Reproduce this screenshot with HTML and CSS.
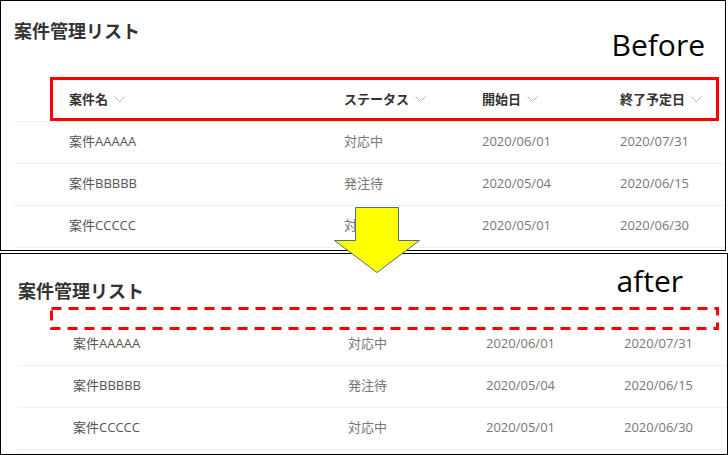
FILE: index.html
```html
<!DOCTYPE html>
<html lang="ja">
<head>
<meta charset="utf-8">
<title>案件管理リスト</title>
<link rel="stylesheet" href="styles.css">
</head>
<body>
<div class="page">
  <section class="panel panel-before">
    <div class="panel-head">
      <h2 class="list-title">案件管理リスト</h2>
      <span class="label">Before</span>
    </div>
    <div class="list">
      <div class="header-row">
        <div class="header-box cols">
          <div class="hcell">案件名<svg class="chev" width="11" height="6" viewBox="0 0 11 6"><polyline points="0.5,0.5 5.5,5.5 10.5,0.5"/></svg></div>
          <div class="hcell">ステータス<svg class="chev" width="11" height="6" viewBox="0 0 11 6"><polyline points="0.5,0.5 5.5,5.5 10.5,0.5"/></svg></div>
          <div class="hcell">開始日<svg class="chev" width="11" height="6" viewBox="0 0 11 6"><polyline points="0.5,0.5 5.5,5.5 10.5,0.5"/></svg></div>
          <div class="hcell">終了予定日<svg class="chev" width="11" height="6" viewBox="0 0 11 6"><polyline points="0.5,0.5 5.5,5.5 10.5,0.5"/></svg></div>
        </div>
      </div>
      <div class="row cols"><span class="cell name">案件AAAAA</span><span class="cell">対応中</span><span class="cell">2020/06/01</span><span class="cell">2020/07/31</span></div>
      <div class="row cols"><span class="cell name">案件BBBBB</span><span class="cell">発注待</span><span class="cell">2020/05/04</span><span class="cell">2020/06/15</span></div>
      <div class="row cols"><span class="cell name">案件CCCCC</span><span class="cell">対応中</span><span class="cell">2020/05/01</span><span class="cell">2020/06/30</span></div>
    </div>
  </section>

  <section class="panel panel-after">
    <div class="panel-head">
      <h2 class="list-title">案件管理リスト</h2>
      <span class="label">after</span>
    </div>
    <svg class="removed-header" width="669" height="23" viewBox="0 0 669 23"><rect x="1.5" y="1.5" width="666" height="20"/></svg>
    <div class="list">
      <div class="row cols"><span class="cell name">案件AAAAA</span><span class="cell">対応中</span><span class="cell">2020/06/01</span><span class="cell">2020/07/31</span></div>
      <div class="row cols"><span class="cell name">案件BBBBB</span><span class="cell">発注待</span><span class="cell">2020/05/04</span><span class="cell">2020/06/15</span></div>
      <div class="row cols"><span class="cell name">案件CCCCC</span><span class="cell">対応中</span><span class="cell">2020/05/01</span><span class="cell">2020/06/30</span></div>
    </div>
  </section>

  <svg class="arrow" width="95" height="72" viewBox="0 0 95 72"><polygon points="25.5,3.5 68.5,3.5 68.5,36.5 89.5,36.5 47,68.5 4.5,36.5 25.5,36.5"/></svg>
</div>
</body>
</html>
```

FILE: styles.css
```css
* {
  box-sizing: border-box;
}

html, body {
  margin: 0;
  padding: 0;
  background: #fff;
}

body {
  font-family: "Open Sans", "Noto Sans CJK JP", sans-serif;
  color: #333;
}

.page {
  position: relative;
  width: 728px;
  height: 455px;
  overflow: hidden;
}

.panel {
  position: relative;
  border: 1px solid #000;
  overflow: hidden;
  background: #fff;
}

.panel-before {
  width: 726px;
  height: 251px;
}

.panel-after {
  width: 728px;
  height: 202px;
  margin-top: 2px;
}

.panel-head {
  display: flex;
  justify-content: space-between;
  align-items: flex-start;
}

.panel-before .panel-head {
  padding: 16px 20px 0 13px;
}

.panel-after .panel-head {
  padding: 9px 44px 0 17px;
}

.list-title {
  margin: 0;
  font-family: "Noto Sans CJK JP", sans-serif;
  font-size: 18px;
  font-weight: 700;
  line-height: 26px;
  color: #333;
}

.panel-after .list-title {
  margin-top: 14px;
}

.label {
  font-family: "Open Sans", sans-serif;
  font-size: 30px;
  line-height: 36px;
  color: #000;
}

.panel-before .label {
  margin-top: 10px;
}

.list {
  display: flex;
  flex-direction: column;
}

.panel-before .list {
  margin: 14px 0 0 13px;
}

.panel-after .list {
  margin: 21px 0 0 17px;
}

.cols {
  display: grid;
  grid-template-columns: 275px 138px 138px 1fr;
  align-items: center;
}

.header-row {
  padding: 0 6px 0 36px;
  border-bottom: 1px solid #f0f0f0;
}

.header-box {
  height: 44px;
  border: 3px solid #ff0000;
  padding: 0 0 1px 16px;
}

.hcell {
  display: flex;
  align-items: center;
  gap: 6px;
  font-size: 13px;
  font-weight: 700;
  line-height: 18px;
  color: #333;
}

.chev {
  display: block;
  fill: none;
  stroke: #b3b3b3;
  stroke-width: 1;
}

.row {
  height: 42px;
  padding: 0 0 3px 55px;
  border-bottom: 1px solid #f0f0f0;
}

.cell {
  font-size: 13px;
  line-height: 18px;
  color: #777;
  white-space: nowrap;
}

.cell.name {
  color: #555;
}

.removed-header {
  position: absolute;
  left: 49px;
  top: 53px;
  fill: none;
  stroke: #ff0000;
  stroke-width: 3;
  stroke-dasharray: 10 7;
}

.arrow {
  position: absolute;
  left: 330px;
  top: 204px;
  fill: #ffff00;
  stroke: #4f6d8f;
  stroke-width: 1;
}
```
